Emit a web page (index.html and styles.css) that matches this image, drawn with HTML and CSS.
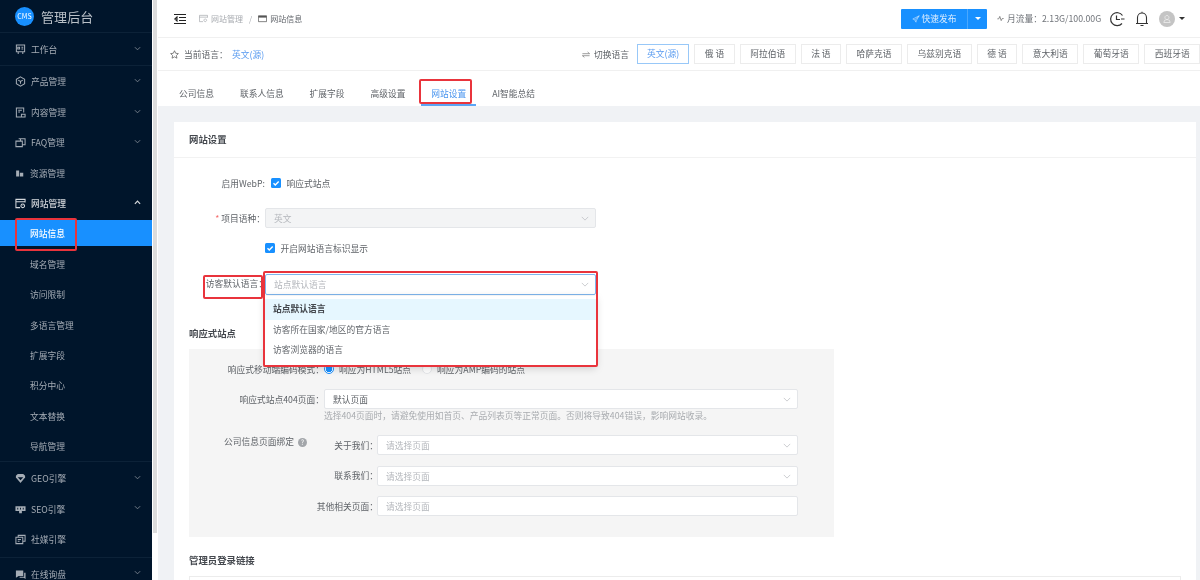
FILE: index.html
```html
<!doctype html>
<html>
<head>
<title>网站信息</title>
<meta charset="UTF-8">
<link rel="stylesheet" href="styles.css">
</head>
<body>

<aside class="sidebar">
  <div class="logo">
    <span class="logo-mark">CMS</span>
    <span class="logo-text">管理后台</span>
  </div>

  <nav class="menu">
    <div class="menu-item first">
      <svg class="menu-icon" viewBox="0 0 12 12"><path d="M1.5 1h9v7.5h-9zM3.5 8.5V11M8.5 8.5V11M3 3.5h2v2H3zM7 3.5h2M7 5.5h2" /></svg>
      工作台
      <svg class="chev" viewBox="0 0 8 5"><path d="M1 1l3 3 3-3" /></svg>
    </div>
    <div class="menu-item">
      <svg class="menu-icon" viewBox="0 0 12 12"><path d="M6 1l4.5 2.5v5L6 11 1.5 8.5v-5zM3.5 4.5L6 6l2.5-1.5M6 6v2.5" /></svg>
      产品管理
      <svg class="chev" viewBox="0 0 8 5"><path d="M1 1l3 3 3-3" /></svg>
    </div>
    <div class="menu-item">
      <svg class="menu-icon" viewBox="0 0 12 12"><path d="M7.5 11h-6V1h8v5M3.5 3.5h4M3.5 5.5h2M7 8h4v3H7z" /></svg>
      内容管理
      <svg class="chev" viewBox="0 0 8 5"><path d="M1 1l3 3 3-3" /></svg>
    </div>
    <div class="menu-item">
      <svg class="menu-icon" viewBox="0 0 12 12"><path d="M4 2h7v6.5H8M1 4.5h7v6H1zM6 2v2.5" /></svg>
      FAQ管理
      <svg class="chev" viewBox="0 0 8 5"><path d="M1 1l3 3 3-3" /></svg>
    </div>
    <div class="menu-item">
      <svg class="menu-icon small" viewBox="0 0 12 12"><path class="solid" d="M1.5 2h4v8h-4zM6.5 5H11v5H6.5z" /></svg>
      资源管理
    </div>
    <div class="menu-item open">
      <svg class="menu-icon" viewBox="0 0 12 12"><path d="M5.500 10.500H1v-9h10V5M1 4h10M8.500 6.500a2 2 0 1 1-.1 0M8.500 8v.5" /></svg>
      网站管理
      <svg class="chev" viewBox="0 0 8 5"><path d="M1 4l3-3 3 3" /></svg>
    </div>

    <div class="sub-item active">
      网站信息
      <span class="mark mark-menu"></span>
    </div>
    <div class="sub-item">域名管理</div>
    <div class="sub-item">访问限制</div>
    <div class="sub-item">多语言管理</div>
    <div class="sub-item">扩展字段</div>
    <div class="sub-item">积分中心</div>
    <div class="sub-item">文本替换</div>
    <div class="sub-item">导航管理</div>

    <div class="menu-item divided">
      <svg class="menu-icon" viewBox="0 0 12 12"><path class="solid" d="M1 3l2-2h6l2 2v2l-5 6-5-6z" /><path class="cut" d="M3 4.500h6L6 8z" /></svg>
      GEO引擎
      <svg class="chev" viewBox="0 0 8 5"><path d="M1 1l3 3 3-3" /></svg>
    </div>
    <div class="menu-item">
      <svg class="menu-icon" viewBox="0 0 12 12"><path class="solid" d="M.5 2.500h11v5h-4V10h-3V7.500h-4z" /><path class="cut" d="M2.500 4h1v2h-1zM5.500 4h1v2h-1zM8.500 4h1v2h-1z" /></svg>
      SEO引擎
      <svg class="chev" viewBox="0 0 8 5"><path d="M1 1l3 3 3-3" /></svg>
    </div>
    <div class="menu-item">
      <svg class="menu-icon" viewBox="0 0 12 12"><path d="M3.500 3.500v-2H11V8H8.500M1 3.500h7.500v7H1zM3 6h3.500M3 8h2" /></svg>
      社媒引擎
    </div>
    <div class="menu-item divided last">
      <svg class="menu-icon" viewBox="0 0 12 12"><path class="solid" d="M1 1.500h8v6H4L1 9.500zM10 4h1.500v7l-2-1.500H5v-1h5z" /></svg>
      在线询盘
      <svg class="chev" viewBox="0 0 8 5"><path d="M1 1l3 3 3-3" /></svg>
    </div>
  </nav>
</aside>

<div class="side-track"><div class="side-thumb"></div></div>

<div class="page">

  <header class="topbar">
    <svg class="collapse" viewBox="0 0 12 10"><path d="M0 .5h12M5 3.500h7M5 6.500h7M0 9.500h12M3 3L.8 5 3 7z" /></svg>
    <div class="crumbs">
      <svg class="crumb-icon" viewBox="0 0 10 10"><path d="M4.500 8.500h-4v-7h9V4M.5 3.500h9M7 5.500a1.500 1.500 0 1 1-.1 0" /></svg>
      <span>网站管理</span>
      <span class="crumb-sep">/</span>
      <svg class="crumb-icon now" viewBox="0 0 10 10"><path d="M.5 2h9v6.500h-9z" /><path class="solid" d="M.5 2h9v2h-9z" /></svg>
      <span class="crumb-now">网站信息</span>
    </div>
    <div class="top-right">
      <div class="publish">
        <span class="publish-main">
          <svg class="send" viewBox="0 0 10 10"><path d="M9 1L1 5l2.500 1L9 1 5 7.500V9L3.500 6" /></svg>
          快速发布
        </span>
        <span class="publish-drop"><i class="caret white"></i></span>
      </div>
      <div class="traffic">
        <svg class="pulse" viewBox="0 0 10 10"><path d="M.5 5.500h2L4 2l2 6 1.500-3h2" /></svg>
        月流量：2.13G/100.00G
      </div>
      <svg class="clock" viewBox="0 0 16 16"><path d="M13 12.500A6.500 6.500 0 1 1 13.500 4.500M7.500 4.500v4H11M12 8h3.500" /></svg>
      <svg class="bell" viewBox="0 0 14 16"><path d="M1 12.500h12M2.500 12.500v-6a4.500 4.500 0 0 1 9 0v6M5.500 14.500h3M7 2V.8" /></svg>
      <div class="avatar">
        <svg viewBox="0 0 16 16"><path d="M8 4.500a2 2 0 1 1-.1 0M4.800 11.500a3.200 3 0 0 1 6.400 0z" /></svg>
      </div>
      <i class="caret dark"></i>
    </div>
  </header>

  <div class="langbar">
    <svg class="star" viewBox="0 0 10 10"><path d="M5 .8l1.300 2.800 3 .4-2.200 2.100.6 3L5 7.600 2.300 9.100l.6-3L.7 4l3-.4z" /></svg>
    <span class="lang-label">当前语言：</span>
    <span class="lang-current">英文(源)</span>
    <div class="lang-switch">
      <svg class="swap" viewBox="0 0 10 8"><path d="M.5 3h9L7 .8M9.500 5.500h-9L3 7.500" /></svg>
      <span class="switch-label">切换语言</span>
      <span class="lang on">英文(源)</span>
      <span class="lang">俄 语</span>
      <span class="lang">阿拉伯语</span>
      <span class="lang">法 语</span>
      <span class="lang">哈萨克语</span>
      <span class="lang">乌兹别克语</span>
      <span class="lang">德 语</span>
      <span class="lang">意大利语</span>
      <span class="lang">葡萄牙语</span>
      <span class="lang">西班牙语</span>
    </div>
  </div>

  <div class="tabs">
    <span class="tab">公司信息</span>
    <span class="tab">联系人信息</span>
    <span class="tab">扩展字段</span>
    <span class="tab">高级设置</span>
    <span class="tab current">网站设置<span class="mark mark-tab"></span></span>
    <span class="tab">AI智能总结</span>
  </div>

  <main class="content">
    <section class="card">
      <div class="card-head">网站设置</div>
      <div class="card-body">

        <div class="row">
          <label class="row-label">启用WebP:</label>
          <span class="check offset"><svg viewBox="0 0 10 10"><path d="M2.500 5.200l1.800 1.800 3.400-3.600" /></svg></span>
          <span class="check-text">响应式站点</span>
        </div>

        <div class="row row-tight">
          <label class="row-label"><em>*</em> 项目语种：</label>
          <div class="select disabled">英文<svg class="arrow" viewBox="0 0 10 6"><path d="M1 1l4 4 4-4" /></svg></div>
        </div>

        <div class="row row-wide">
          <label class="row-label"></label>
          <span class="check"><svg viewBox="0 0 10 10"><path d="M2.500 5.200l1.800 1.800 3.400-3.600" /></svg></span>
          <span class="check-text">开启网站语言标识显示</span>
        </div>

        <div class="row row-last">
          <label class="row-label visitor">访客默认语言：<span class="mark mark-label"></span></label>
          <div class="select focus">
            站点默认语言
            <svg class="arrow" viewBox="0 0 10 6"><path d="M1 1l4 4 4-4" /></svg>
            <span class="mark mark-select"></span>
            <ul class="dropdown">
              <li class="picked">站点默认语言</li>
              <li>访客所在国家/地区的官方语言</li>
              <li>访客浏览器的语言</li>
            </ul>
          </div>
        </div>

        <h3 class="section-title">响应式站点</h3>
        <div class="panel">
          <div class="panel-row radios">
            <label class="panel-label">响应式移动端编码模式：</label>
            <span class="radio on"></span><span class="radio-text">响应为HTML5站点</span>
            <span class="radio"></span><span class="radio-text">响应为AMP编码的站点</span>
          </div>
          <div class="panel-row">
            <label class="panel-label">响应式站点404页面：</label>
            <div class="select wide filled">默认页面<svg class="arrow" viewBox="0 0 10 6"><path d="M1 1l4 4 4-4" /></svg></div>
          </div>
          <p class="hint">选择404页面时，请避免使用如首页、产品列表页等正常页面。否则将导致404错误，影响网站收录。</p>
          <div class="bind">
            <div class="bind-title">公司信息页面绑定<span class="help">?</span></div>
            <div class="bind-rows">
              <div class="bind-row">
                <label>关于我们：</label>
                <div class="select wide">请选择页面<svg class="arrow" viewBox="0 0 10 6"><path d="M1 1l4 4 4-4" /></svg></div>
              </div>
              <div class="bind-row">
                <label>联系我们：</label>
                <div class="select wide">请选择页面<svg class="arrow" viewBox="0 0 10 6"><path d="M1 1l4 4 4-4" /></svg></div>
              </div>
              <div class="bind-row">
                <label>其他相关页面：</label>
                <div class="select wide">请选择页面</div>
              </div>
            </div>
          </div>
        </div>

        <h3 class="section-title admin">管理员登录链接</h3>
        <div class="admin-box"></div>

      </div>
    </section>
  </main>
</div>

</body>
</html>
```

FILE: styles.css
```css
* {
  box-sizing: border-box;
}

html, body {
  height: 100%;
  margin: 0;
  overflow: hidden;
}

html {
  filter: blur(.3px);
}

body {
  display: flex;
  background: #fff;
  font-family: "Noto Sans CJK SC", "Noto Sans", sans-serif;
  font-size: 8.75px;
  color: #5f6368;
}

svg {
  fill: none;
  stroke: currentColor;
  flex: none;
}

/* sidebar */
.sidebar {
  width: 152px;
  flex: none;
  height: 100%;
  overflow: hidden;
  background: #00152b;
  color: #a5adb6;
}

.logo {
  height: 33px;
  display: flex;
  align-items: center;
  padding-left: 15px;
  gap: 7px;
  border-bottom: 1px solid #0c2238;
}

.logo-mark {
  width: 19px;
  height: 19px;
  border-radius: 50%;
  background: #1890ff;
  color: #fff;
  font-size: 7px;
  line-height: 19px;
  text-align: center;
}

.logo-text {
  font-size: 13px;
  color: #b9c0c7;
  letter-spacing: .1px;
}

.menu-item, .sub-item {
  height: 30.4px;
  padding-top: 1.6px;
  display: flex;
  align-items: center;
  position: relative;
}

.menu-item {
  padding-left: 15px;
}

.menu-item.first {
  height: 33px;
  border-bottom: 1px solid #0c2238;
}

.menu-item.open {
  color: #d5d9dd;
  font-weight: 500;
}

.menu-item.divided {
  border-top: 1px solid #0c2238;
  height: 32px;
}

.menu-item.last {
  margin-top: 3px;
  height: 32px;
}

.menu-icon {
  width: 11px;
  height: 11px;
  margin-right: 5px;
  stroke-width: 1.1;
}

.menu-icon.small {
  width: 9px;
  margin-right: 6px;
}

.solid {
  fill: currentColor;
  stroke: none;
}

.cut {
  fill: #00152b;
  stroke: none;
}

.chev {
  position: absolute;
  right: 11px;
  top: 50%;
  margin-top: -3px;
  width: 7px;
  height: 5px;
  stroke-width: 1;
  color: #7f8994;
}

.open .chev {
  color: #d5d9dd;
  stroke-width: 1.4;
}

.sub-item {
  padding-left: 30px;
}

.sub-item.active {
  height: 25.4px;
  margin: 2.5px 0;
  padding-top: 0;
  background: #1890ff;
  color: #fff;
  font-weight: 500;
}

.side-track {
  width: 6px;
  flex: none;
  padding-left: 1px;
}

.side-thumb {
  width: 4px;
  height: 533px;
  background: #dcdcdc;
}

/* red annotation boxes laid on top of the screenshot */
.mark {
  position: absolute;
  border: 2.5px solid #e9343c;
  border-radius: 2px;
  pointer-events: none;
  z-index: 5;
}

.mark-menu {
  left: 15px;
  top: -2.5px;
  width: 62px;
  height: 33.5px;
}

.mark-tab {
  left: -2.5px;
  top: 7.5px;
  width: 53px;
  height: 25px;
}

.mark-label {
  left: 14px;
  top: 1px;
  width: 60px;
  height: 24px;
}

.mark-select {
  left: -3px;
  top: -4.5px;
  width: 335px;
  height: 96.5px;
  z-index: 7;
}

/* page */
.page {
  flex: 1;
  min-width: 0;
  height: 100%;
  display: flex;
  flex-direction: column;
}

.topbar {
  height: 38px;
  flex: none;
  display: flex;
  align-items: center;
  padding-left: 16px;
  border-bottom: 1px solid #f0f0f0;
}

.collapse {
  width: 12px;
  height: 10px;
  color: #222;
  stroke-width: 1.1;
}

.crumbs {
  display: flex;
  align-items: center;
  margin-left: 13px;
  font-size: 8px;
  color: #a8abb0;
}

.crumb-icon {
  width: 9px;
  height: 9px;
  margin-right: 3px;
  stroke-width: .8;
}

.crumb-icon.now {
  color: #555;
}

.crumb-sep {
  margin: 0 6px;
}

.crumb-now {
  color: #60646a;
}

.top-right {
  margin-left: auto;
  display: flex;
  align-items: center;
  padding-right: 15px;
}

.publish {
  width: 86px;
  height: 20px;
  display: flex;
  background: #1890ff;
  color: #dcedff;
  border-radius: 1px;
}

.publish-main {
  width: 66px;
  display: flex;
  align-items: center;
  justify-content: center;
  gap: 2px;
}

.send {
  width: 8px;
  height: 8px;
  stroke-width: .7;
}

.publish-drop {
  flex: 1;
  display: flex;
  align-items: center;
  justify-content: center;
  border-left: 1px solid #4aa8ff;
}

.caret {
  width: 0;
  height: 0;
  border-left: 3px solid transparent;
  border-right: 3px solid transparent;
}

.caret.white {
  border-top: 3px solid #fff;
}

.caret.dark {
  border-top: 3px solid #333;
  margin-left: 4px;
}

.traffic {
  margin-left: 10px;
  display: flex;
  align-items: center;
  gap: 3px;
  width: 104px;
  white-space: nowrap;
  color: #70747a;
}

.pulse {
  width: 7px;
  height: 7px;
  stroke-width: .9;
  color: #555;
}

.clock {
  width: 16px;
  height: 16px;
  margin-left: 8px;
  color: #333;
  stroke-width: 1.2;
}

.bell {
  width: 14px;
  height: 16px;
  margin-left: 10px;
  color: #333;
  stroke-width: 1.1;
}

.avatar {
  width: 16px;
  height: 16px;
  margin-left: 10px;
  border-radius: 50%;
  background: #c4c4c4;
  color: #eee;
  display: flex;
}

.avatar svg {
  stroke-width: .8;
}

.langbar {
  height: 33px;
  flex: none;
  display: flex;
  align-items: center;
  padding-left: 12px;
  border-bottom: 1px solid #f0f0f0;
  white-space: nowrap;
}

.star {
  width: 9px;
  height: 9px;
  stroke-width: .8;
  color: #555;
}

.lang-label {
  margin-left: 5px;
  width: 48px;
}

.lang-current {
  color: #5b9cf0;
}

.lang-switch {
  margin-left: auto;
  display: flex;
  align-items: center;
  width: 618px;
  flex: none;
}

.swap {
  width: 8px;
  height: 7px;
  stroke-width: .8;
  color: #666;
}

.switch-label {
  margin: 0 8px 0 4px;
}

.lang {
  height: 20px;
  line-height: 18px;
  padding: 0 9.5px;
  border: 1px solid #ececec;
  margin-right: 5px;
  flex: none;
}

.lang:last-child {
  margin-right: 0;
}

.lang.on {
  padding: 0 9px;
  color: #5b9cf0;
  border-color: #98c8f8;
}

.tabs {
  height: 35px;
  flex: none;
  display: flex;
  gap: 5.9px;
  padding-left: 11px;
}

.tab {
  position: relative;
  padding: 0 10px;
  line-height: 46px;
  height: 35px;
}

.tab.current {
  color: #4d97ef;
  border-bottom: 2px solid #5aa5f5;
}

.content {
  flex: 1;
  min-height: 0;
  overflow: hidden;
  background: #f0f2f5;
  padding: 16px 4px 0 16px;
}

.card {
  background: #fff;
  height: 100%;
}

.card-head {
  height: 36px;
  padding-left: 15px;
  line-height: 35px;
  font-size: 9.4px;
  font-weight: 700;
  color: #44484e;
  border-bottom: 1px solid #f2f2f2;
}

.card-body {
  padding: 15px 15px 0;
}

.row {
  display: flex;
  align-items: center;
  height: 20px;
  margin-bottom: 15px;
}

.row-tight {
  margin-bottom: 10px;
}

.row-wide {
  margin-bottom: 16px;
}

.row-last {
  height: 21px;
  margin-bottom: 0;
}

.row-label {
  width: 76px;
  flex: none;
  text-align: right;
  white-space: nowrap;
  position: relative;
}

.row-label em {
  color: #f56c6c;
  font-style: normal;
}

.visitor {
  align-self: flex-start;
  height: 26px;
  line-height: 20px;
  width: 78px;
  margin-right: -2px;
}

.check {
  width: 10px;
  height: 10px;
  background: #1890ff;
  border-radius: 1.5px;
  color: #fff;
  display: flex;
  flex: none;
}

.check.offset {
  margin-left: 6px;
}

.check svg {
  stroke-width: 1.4;
}

.check-text {
  margin-left: 5.5px;
}

.select {
  position: relative;
  width: 331px;
  height: 20px;
  padding-left: 8px;
  line-height: 19px;
  border: 1px solid #e4e6e9;
  border-radius: 2px;
  background: #fff;
  color: #b4b7bc;
  flex: none;
}

.select.disabled {
  background: #f3f4f5;
}

.select.focus {
  height: 21px;
  border-color: #7fb6ee;
}

.select.wide {
  width: auto;
  flex: 1;
}

.select.filled {
  color: #5f6368;
}

.arrow {
  position: absolute;
  right: 6px;
  top: 7px;
  width: 8px;
  height: 5px;
  color: #b9bcc0;
  stroke-width: .9;
}

.dropdown {
  position: absolute;
  left: -1px;
  top: 21px;
  width: 331px;
  height: 70px;
  margin: 0;
  padding: 3px 0 0;
  list-style: none;
  background: #fff;
  box-shadow: 0 2px 8px rgba(0, 0, 0, .18);
  color: #5f6368;
  z-index: 6;
}

.dropdown li {
  height: 20.5px;
  line-height: 20px;
  padding-left: 8px;
}

.dropdown .picked {
  background: #e6f7ff;
  font-weight: 700;
  color: #44484e;
}

.section-title {
  margin: 29px 0 7px;
  font-size: 9.4px;
  line-height: 18px;
  height: 18px;
  font-weight: 700;
  color: #44484e;
}

.section-title.admin {
  margin: 14px 0 7px;
}

.panel {
  width: 645px;
  height: 188px;
  padding: 10px 36px 0 0;
  background: #f5f5f5;
}

.panel-row {
  display: flex;
  align-items: center;
  height: 20px;
  margin-bottom: 10px;
}

.panel-label {
  width: 135px;
  flex: none;
  text-align: right;
  white-space: nowrap;
}

.radio {
  width: 10px;
  height: 10px;
  border-radius: 50%;
  border: 1px solid #e4e6e9;
  background: #fff;
  flex: none;
}

.radio.on {
  border: 1px solid #1890ff;
  background: radial-gradient(circle, #1890ff 3px, #fff 3.5px);
}

.radio-text {
  margin: 0 11px 0 5px;
}

.hint {
  margin: -10px 0 13px 135px;
  height: 13px;
  line-height: 13px;
  color: #a9acb0;
  white-space: nowrap;
}

.bind {
  display: flex;
}

.bind-title {
  width: 118px;
  flex: none;
  text-align: right;
  line-height: 13px;
  white-space: nowrap;
}

.help {
  display: inline-block;
  width: 9px;
  height: 9px;
  margin-left: 4px;
  border-radius: 50%;
  background: #a3a6aa;
  color: #fff;
  font-size: 7px;
  line-height: 9px;
  text-align: center;
}

.bind-rows {
  flex: 1;
  display: flex;
  flex-direction: column;
  gap: 10.5px;
}

.bind-row {
  display: flex;
  align-items: center;
}

.bind-row label {
  width: 71px;
  margin-right: -1px;
  flex: none;
  text-align: right;
  white-space: nowrap;
}

.admin-box {
  width: 100%;
  height: 60px;
  border: 1px solid #ececec;
}
```
